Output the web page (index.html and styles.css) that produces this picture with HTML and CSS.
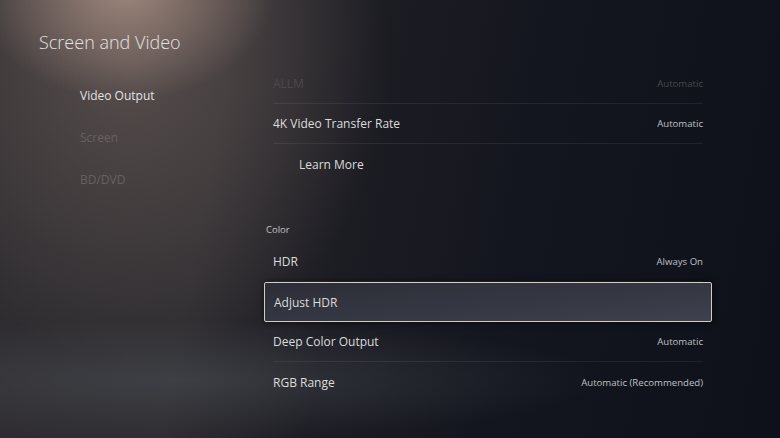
FILE: index.html
```html
<!DOCTYPE html>
<html lang="en">
<head>
  <meta charset="UTF-8">
  <meta name="viewport" content="width=device-width, initial-scale=1.0">
  <title>Screen and Video</title>
  <link rel="stylesheet" href="styles.css">
</head>
<body>
  <div class="screen">
    <aside class="sidebar">
      <h1>Screen and Video</h1>
      <nav class="menu">
        <a class="menu-item active">Video Output</a>
        <a class="menu-item">Screen</a>
        <a class="menu-item">BD/DVD</a>
      </nav>
    </aside>

    <main class="settings">
      <div class="row faded">
        <span class="label">ALLM</span>
        <span class="value">Automatic</span>
      </div>
      <div class="row">
        <span class="label">4K Video Transfer Rate</span>
        <span class="value">Automatic</span>
      </div>
      <div class="row link last">
        <span class="label">Learn More</span>
      </div>

      <h2 class="group">Color</h2>
      <div class="row">
        <span class="label">HDR</span>
        <span class="value">Always On</span>
      </div>
      <div class="row focused">
        <span class="label">Adjust HDR</span>
      </div>
      <div class="row">
        <span class="label">Deep Color Output</span>
        <span class="value">Automatic</span>
      </div>
      <div class="row last">
        <span class="label">RGB Range</span>
        <span class="value">Automatic (Recommended)</span>
      </div>
    </main>
  </div>
</body>
</html>
```

FILE: styles.css
```css
html, body {
  margin: 0;
  padding: 0;
  height: 100%;
}

body {
  font-family: 'Open Sans', 'Noto Sans', Arial, sans-serif;
  color: #dcdcdc;
  overflow: hidden;
  background:
    radial-gradient(ellipse 150px 110px at 125px -10px, rgba(190, 160, 145, 0.7), rgba(150, 125, 115, 0) 100%),
    radial-gradient(ellipse 260px 300px at 130px 60px, rgba(120, 104, 98, 0.55), rgba(90, 80, 78, 0) 100%),
    radial-gradient(ellipse 420px 60px at 180px 380px, rgba(80, 86, 92, 0.45), rgba(70, 74, 80, 0) 100%),
    linear-gradient(100deg, #2e2c30 0%, #2f2d31 28%, #1c1c23 45%, #14161f 65%, #0e101a 100%);
}

.screen {
  display: flex;
  height: 438px;
}

/* colonna sinistra */
.sidebar {
  width: 264px;
  flex-shrink: 0;
  padding: 30px 0 0 39px;
  box-sizing: border-box;
}

.sidebar h1 {
  margin: 0;
  font-size: 18px;
  font-weight: 300;
  color: #e2e2e2;
}

.menu {
  display: flex;
  flex-direction: column;
  margin: 21px 0 0 41px;
}

.menu-item {
  height: 42px;
  line-height: 42px;
  font-size: 12px;
  color: #67625f;
}

.menu-item.active {
  color: #e2e2e2;
}

/* lista impostazioni */
.settings {
  width: 448px;
  padding-top: 64px;
}

.row {
  display: flex;
  justify-content: space-between;
  align-items: center;
  height: 40px;
  margin: 0 9px;
  border-bottom: 1px solid rgba(255, 255, 255, 0.07);
  box-sizing: border-box;
  font-size: 12px;
}

.row.last {
  border-bottom: none;
}

.value {
  font-size: 9.6px;
  color: #bfc0c4;
}

.row.faded .label,
.row.faded .value {
  color: #4a484b;
}

.row.link .label {
  padding-left: 26px;
}

.group {
  margin: 39px 0 0 2px;
  height: 19px;
  font-size: 9.5px;
  font-weight: 400;
  color: #c2c2c2;
}

.row.focused {
  margin: 0;
  padding: 0 9px;
  border: 1.5px solid #d6ccc6;
  border-radius: 2px;
  background: linear-gradient(175deg, #2c2d36 0%, #363944 60%, #3e424e 100%);
  box-shadow: 0 0 6px rgba(0, 0, 0, 0.6);
}
```
